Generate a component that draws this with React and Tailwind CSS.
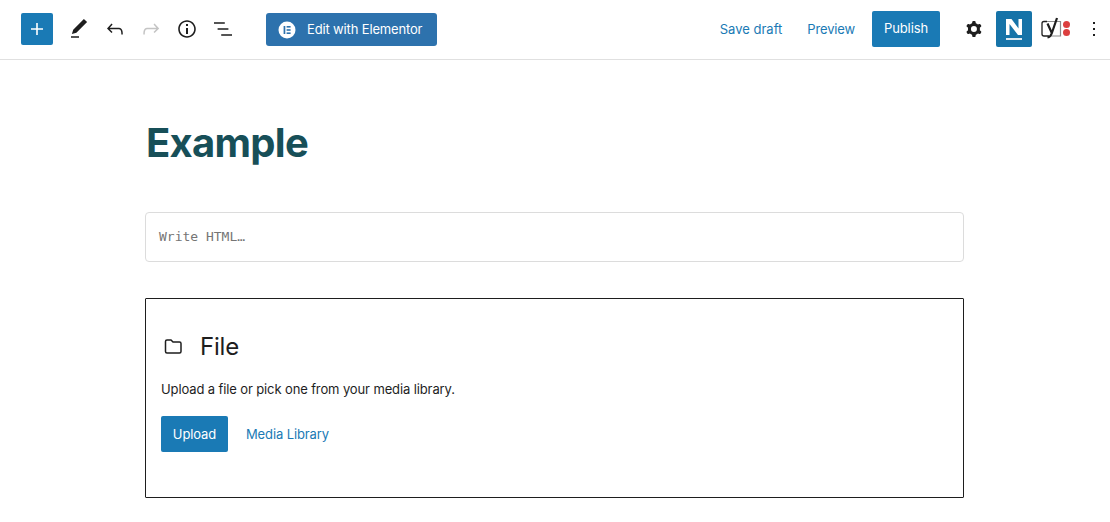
const Ic = ({ d, className = "", size = 24 }) => (
  <svg width={size} height={size} viewBox="0 0 24 24" className={className} fill="currentColor" fillRule="evenodd">
    <path d={d} />
  </svg>
);

const IconButton = ({ d, muted }) => (
  <span className={`w-9 h-9 flex items-center justify-center ${muted ? "text-[#c4c4c4]" : "text-[#1e1e1e]"}`}>
    <Ic d={d} />
  </span>
);

export default function App() {
  return (
    <div className="w-[1110px] h-[522px] overflow-hidden bg-white font-['Inter','Liberation_Sans',sans-serif] text-[#1e1e1e]">
      <header className="h-[60px] border-b border-[#e0e0e0] flex items-center pl-[21px] pr-[4px] pb-[1px]">
        <span className="w-8 h-8 rounded-[2px] bg-[#1a7ab5] text-white flex items-center justify-center">
          <Ic d="M18 11.2h-5.2V6h-1.6v5.2H6v1.6h5.2V18h1.6v-5.2H18z" />
        </span>
        <div className="flex ml-2">
          <IconButton d="M20.1 5.1L16.9 2 6.2 12.7l-1.3 4.4 4.5-1.3L20.1 5.1zM4 20.8h8v-1.5H4v1.5z" />
          <IconButton d="M18.3 11.7c-.6-.6-1.4-.9-2.3-.9H6.7l2.9-3.3-1.1-1-4.5 5L8.5 16l1-1-2.7-2.7H16c.5 0 .9.2 1.3.5 1 1 1 3.4 1 4.5v.3h1.5v-.2c0-1.5 0-4.3-1.5-5.7z" />
          <IconButton muted d="M15.6 6.5l-1.1 1 2.9 3.3H8c-.9 0-1.7.3-2.3.9-1.4 1.5-1.4 4.2-1.4 5.6v.2h1.5v-.3c0-1.1 0-3.5 1-4.5.3-.3.7-.5 1.3-.5h9.2L14.5 15l1.1 1.1 4.6-4.6-4.6-5z" />
          <IconButton d="M12 3.2c-4.8 0-8.8 3.9-8.8 8.8 0 4.8 3.9 8.8 8.8 8.8 4.8 0 8.8-3.9 8.8-8.8 0-4.8-4-8.8-8.8-8.8zm0 16c-4 0-7.2-3.3-7.2-7.2C4.8 8 8 4.8 12 4.8s7.2 3.3 7.2 7.2c0 4-3.2 7.2-7.2 7.2zM11 17h2v-6h-2v6zm0-8h2V7h-2v2z" />
          <IconButton d="M13.8 5.2H3v1.5h10.8V5.2zm-3.6 12v1.5H21v-1.5H10.2zm7.2-6H6.6v1.5h10.8v-1.5z" />
        </div>
        <button className="ml-[25px] mt-[1px] w-[171px] h-[33px] rounded-[3px] bg-[#2d72ad] text-white text-[13px] tracking-[-0.15px] flex items-center pl-[12px] pt-[1px]">
          <svg width="18" height="18" viewBox="0 0 18 18" className="mr-[11px]">
            <circle cx="9" cy="9" r="8.5" fill="#fff" />
            <rect x="5.6" y="5" width="1.7" height="8" fill="#2d72ad" />
            <rect x="8.6" y="5" width="4" height="1.6" fill="#2d72ad" />
            <rect x="8.6" y="8.2" width="4" height="1.6" fill="#2d72ad" />
            <rect x="8.6" y="11.4" width="4" height="1.6" fill="#2d72ad" />
          </svg>
          Edit with Elementor
        </button>
        <div className="ml-auto flex items-center">
          <span className="text-[13px] text-[#1a7ab5] pt-[1px]">Save draft</span>
          <span className="ml-[25px] text-[13px] tracking-[-0.15px] text-[#1a7ab5] pt-[1px]">Preview</span>
          <button className="ml-[17px] w-[68px] h-9 rounded-[2px] bg-[#1a7ab5] text-white text-[13px] tracking-[-0.1px]">Publish</button>
          <span className="ml-[22px] w-6 h-6 text-[#1e1e1e]">
            <Ic d="M10.289 4.836A1 1 0 0111.275 4h1.306a1 1 0 01.987.836l.244 1.466c.787.26 1.503.679 2.108 1.218l1.393-.522a1 1 0 011.216.437l.653 1.13a1 1 0 01-.23 1.273l-1.148.944a6.025 6.025 0 010 2.435l1.149.946a1 1 0 01.23 1.272l-.653 1.13a1 1 0 01-1.216.437l-1.394-.522c-.605.54-1.32.958-2.108 1.218l-.244 1.466a1 1 0 01-.987.836h-1.306a1 1 0 01-.986-.836l-.244-1.466a5.995 5.995 0 01-2.108-1.218l-1.394.522a1 1 0 01-1.217-.436l-.653-1.131a1 1 0 01.23-1.272l1.149-.946a6.026 6.026 0 010-2.435l-1.148-.944a1 1 0 01-.23-1.272l.653-1.131a1 1 0 011.217-.437l1.393.522a5.994 5.994 0 012.108-1.218l.244-1.466zM14.929 12a3 3 0 11-6 0 3 3 0 016 0z" />
          </span>
          <span className="ml-[10px] w-9 h-9 rounded-[2px] bg-[#1673a8] flex items-center justify-center">
            <svg width="36" height="36" viewBox="0 0 36 36">
              <path d="M10 8h5.500l7 9.500V8H26v16h-4L13.500 13V24H10z" fill="#fff" />
              <rect x="10" y="27" width="16" height="2" fill="#dfe9f0" />
            </svg>
          </span>
          <span className="ml-[9px] w-[32px] h-[24px]">
            <svg width="32" height="24" viewBox="0 0 32 24">
              <path d="M6 4.500h13.500v14.500H8" fill="none" stroke="#8a8a8a" strokeWidth="1.200" />
              <path d="M6 4.500H3a2 2 0 00-2 2V17a2 2 0 002 2h5" fill="none" stroke="#1e1e1e" strokeWidth="1.300" />
              <path d="M6.500 6.500l4.300 9.500M16 1l-5.300 15.500Q9.500 20 6.500 20.500" fill="none" stroke="#1e1e1e" strokeWidth="2.200" />
              <circle cx="25.500" cy="7.500" r="3.500" fill="#dc3f3f" />
              <circle cx="25.500" cy="15.500" r="3.500" fill="#dc3f3f" />
            </svg>
          </span>
          <span className="ml-[9px] w-6 h-6">
            <Ic d="M13 19h-2v-2h2v2zm0-6h-2v-2h2v2zm0-6h-2V5h2v2z" />
          </span>
        </div>
      </header>

      <main className="w-[819px] ml-[145px]">
        <h1 className="pt-[55px] pl-[1px] h-[152px] text-[40px] tracking-[-0.7px] leading-[56px] font-bold text-[#174f58]">Example</h1>
        <div className="h-[50px] rounded-[4px] border border-[#dcdcdc] flex items-center pl-[13px] font-['DejaVu_Sans_Mono',monospace] text-[13px] text-[#757575]">
          Write HTML…
        </div>
        <section className="mt-[36px] h-[200px] border border-[#1e1e1e] rounded-[1px] px-[15px] pt-[32px]">
          <div className="flex items-center h-[32px]">
            <svg width="24" height="24" viewBox="0 0 24 24" fill="none" stroke="#1e1e1e" strokeWidth="1.5">
              <path d="M4.500 6.500a1.500 1.500 0 011.500-1.500h4l2 2h6.500a1.500 1.500 0 011.500 1.500v8a1.500 1.500 0 01-1.500 1.500H6a1.500 1.500 0 01-1.500-1.500z" />
            </svg>
            <span className="ml-[15px] text-[24px] leading-[32px] tracking-[-0.2px]">File</span>
          </div>
          <p className="mt-[17px] text-[13px] leading-[18px] tracking-[-0.12px]">Upload a file or pick one from your media library.</p>
          <div className="mt-[18px] flex items-center">
            <button className="w-[67px] h-9 rounded-[2px] bg-[#1a7ab5] text-white text-[13px] tracking-[-0.1px] pt-[1px]">Upload</button>
            <span className="ml-[18px] text-[13px] tracking-[-0.12px] pt-[1px] text-[#1a7ab5]">Media Library</span>
          </div>
        </section>
      </main>
    </div>
  );
}
